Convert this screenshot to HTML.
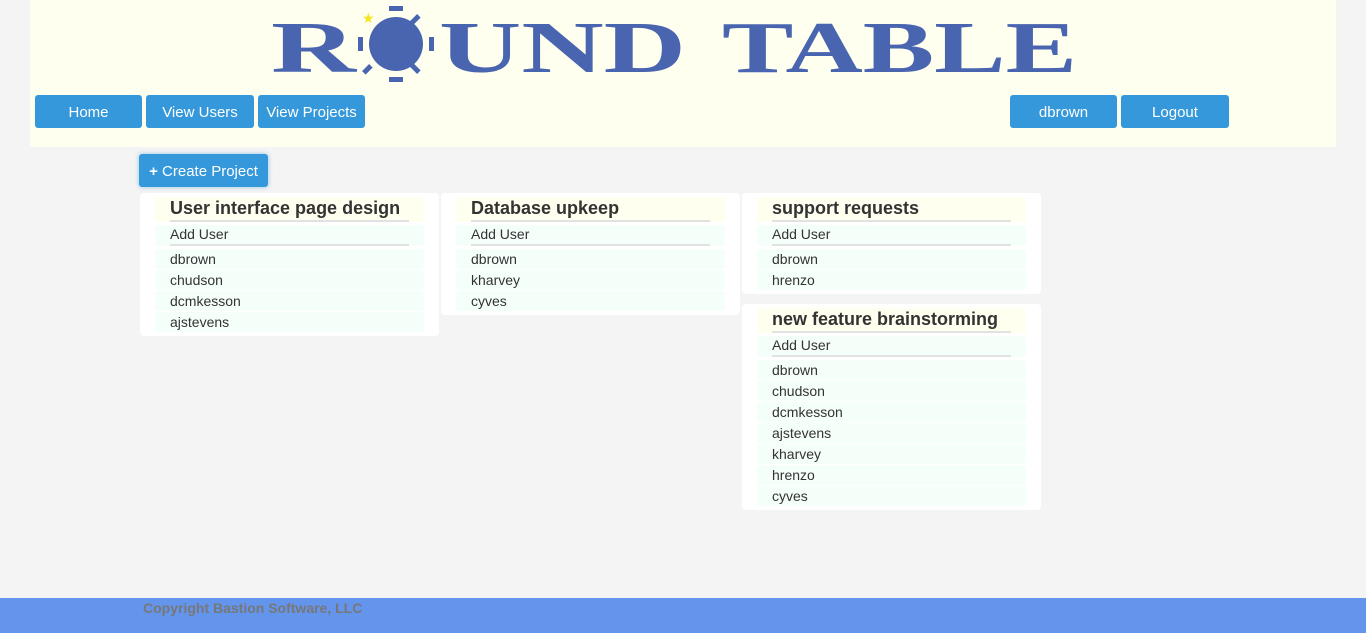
<!DOCTYPE html>
<html><head><style>
body{margin:0;background:#f4f4f4;font-family:"Liberation Sans",Arial,sans-serif;width:1366px;height:633px;position:relative;overflow:hidden}
.hdr{position:absolute;left:30px;top:0;width:1306px;height:147px;background:#fffff0}
.btn{position:absolute;top:95px;height:33px;background:#3498db;color:#fff;font-size:15px;line-height:35px;text-align:center;border-radius:3px}
.cp{position:absolute;left:139px;top:154px;width:129px;height:33px;background:#3498db;color:#fff;font-size:15px;line-height:35px;text-align:center;border-radius:3px;box-shadow:0 0 5px rgba(52,152,219,.5)}
.card{position:absolute;width:299px;background:#fff;border-radius:4px}
.col{margin:4px 14px 4px 15px;width:269px}
.t{background:#fffff0;height:25px;padding-left:15px;font-weight:bold;font-size:18px;color:#333;line-height:22px;position:relative}
.t:after,.a:after{content:"";position:absolute;left:15px;width:239px;height:2px;background:#e2e2e2;bottom:0}
.a{background:#f5fffa;height:21px;margin-top:3px;padding-left:15px;font-size:14px;color:#333;line-height:19px;position:relative;border-radius:3px}
.u{background:#f5fffa;height:20px;margin-top:1px;padding-left:15px;font-size:14px;color:#333;line-height:21px;border-radius:3px}
.a+.u{margin-top:3px}
.ft{position:absolute;left:0;top:598px;width:1366px;height:35px;background:#6495ed}
.ft span{position:absolute;left:143px;top:2px;color:#777;font-weight:bold;font-size:14px}
</style></head><body>
<div class="hdr"></div>
<svg style="position:absolute;left:0;top:0" width="1366" height="95">
<g fill="#4a65b0" font-family="Liberation Serif,serif" font-weight="bold" font-size="73">
<text x="271" y="72" textLength="85" lengthAdjust="spacingAndGlyphs">R</text>
<circle cx="396" cy="44" r="27"/>
<rect x="389" y="6" width="14" height="5"/><rect x="389" y="77" width="14" height="5"/>
<rect x="358" y="37" width="5" height="14"/><rect x="429" y="37" width="5" height="14"/>
<rect x="413" y="14" width="5" height="10" transform="rotate(45 415 19)"/>
<rect x="413" y="64" width="5" height="10" transform="rotate(-45 415 69)"/>
<rect x="365" y="64" width="5" height="10" transform="rotate(45 367 69)"/>
<text x="439" y="72" textLength="247" lengthAdjust="spacingAndGlyphs">UND</text>
<text x="722" y="72" textLength="355" lengthAdjust="spacingAndGlyphs">TABLE</text>
</g>
<text x="362" y="23" fill="#f5e51b" font-size="14">★</text>
</svg>
<div class="btn" style="left:35px;width:107px">Home</div>
<div class="btn" style="left:146px;width:108px">View Users</div>
<div class="btn" style="left:258px;width:107px">View Projects</div>
<div class="btn" style="left:1010px;width:107px">dbrown</div>
<div class="btn" style="left:1121px;width:108px">Logout</div>
<div class="cp"><b>+</b> Create Project</div>
<div class="card" style="left:140px;top:193px"><div class="col"><div class="t">User interface page design</div><div class="a">Add User</div><div class="u">dbrown</div><div class="u">chudson</div><div class="u">dcmkesson</div><div class="u">ajstevens</div></div></div>
<div class="card" style="left:441px;top:193px"><div class="col"><div class="t">Database upkeep</div><div class="a">Add User</div><div class="u">dbrown</div><div class="u">kharvey</div><div class="u">cyves</div></div></div>
<div class="card" style="left:742px;top:193px"><div class="col"><div class="t">support requests</div><div class="a">Add User</div><div class="u">dbrown</div><div class="u">hrenzo</div></div></div>
<div class="card" style="left:742px;top:304px"><div class="col"><div class="t">new feature brainstorming</div><div class="a">Add User</div><div class="u">dbrown</div><div class="u">chudson</div><div class="u">dcmkesson</div><div class="u">ajstevens</div><div class="u">kharvey</div><div class="u">hrenzo</div><div class="u">cyves</div></div></div>
<div class="ft"><span>Copyright Bastion Software, LLC</span></div>
</body></html>
